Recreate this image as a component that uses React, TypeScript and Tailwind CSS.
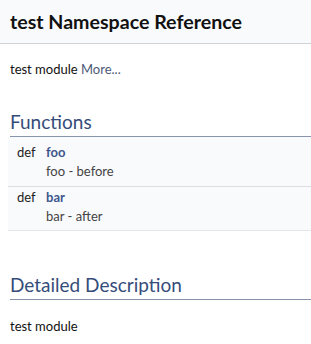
import React from 'react'

const font = { fontFamily: 'Lato, "Open Sans", sans-serif' }

function MemberRow({ name, brief, first }: { name: string; brief: string; first?: boolean }) {
  return (
    <div
      className={`bg-[#f9fafc] border-b ${first ? 'h-[50px] pt-[6px] border-[#dcdee2]' : 'h-[44px] pt-[1px] border-[#e4e6ea]'}`}
    >
      <div className="flex text-[13px] leading-[18px]">
        <span className="w-[38px] pl-[9px] text-[#222]">def</span>
        <span className="font-bold text-[#3d578c]">{name}</span>
      </div>
      <div className="pl-[38px] mt-[1px] text-[13px] leading-[18px] text-[#444]">{brief}</div>
    </div>
  )
}

export default function App() {
  return (
    <div className="w-[311px] h-[344px] bg-white overflow-hidden" style={font}>
      <div className="h-[44px] bg-[#f9fafc] border-b border-[#cfd2d8] px-[10px] flex items-center">
        <h1 className="text-[19.6px] font-bold text-[#111]">test Namespace Reference</h1>
      </div>

      <p className="px-[10px] pt-[16px] text-[13px] leading-[18px] text-[#111]">
        test module <span className="text-[#4d5a77]">More...</span>
      </p>

      <div className="pl-[8px] mt-[31px]">
        <h2 className="ml-[2px] text-[19px] leading-[26px] text-[#354c7b] border-b border-[#8794ab] pb-[1px]">Functions</h2>
        <MemberRow name="foo" brief="foo - before" first />
        <MemberRow name="bar" brief="bar - after" />
      </div>

      <div className="pl-[10px] mt-[41px]">
        <h2 className="text-[19px] leading-[26px] text-[#354c7b] border-b border-[#8794ab] pb-[1px]">Detailed Description</h2>
        <p className="pt-[17px] text-[13px] leading-[18px] text-[#111]">test module</p>
      </div>
    </div>
  )
}
